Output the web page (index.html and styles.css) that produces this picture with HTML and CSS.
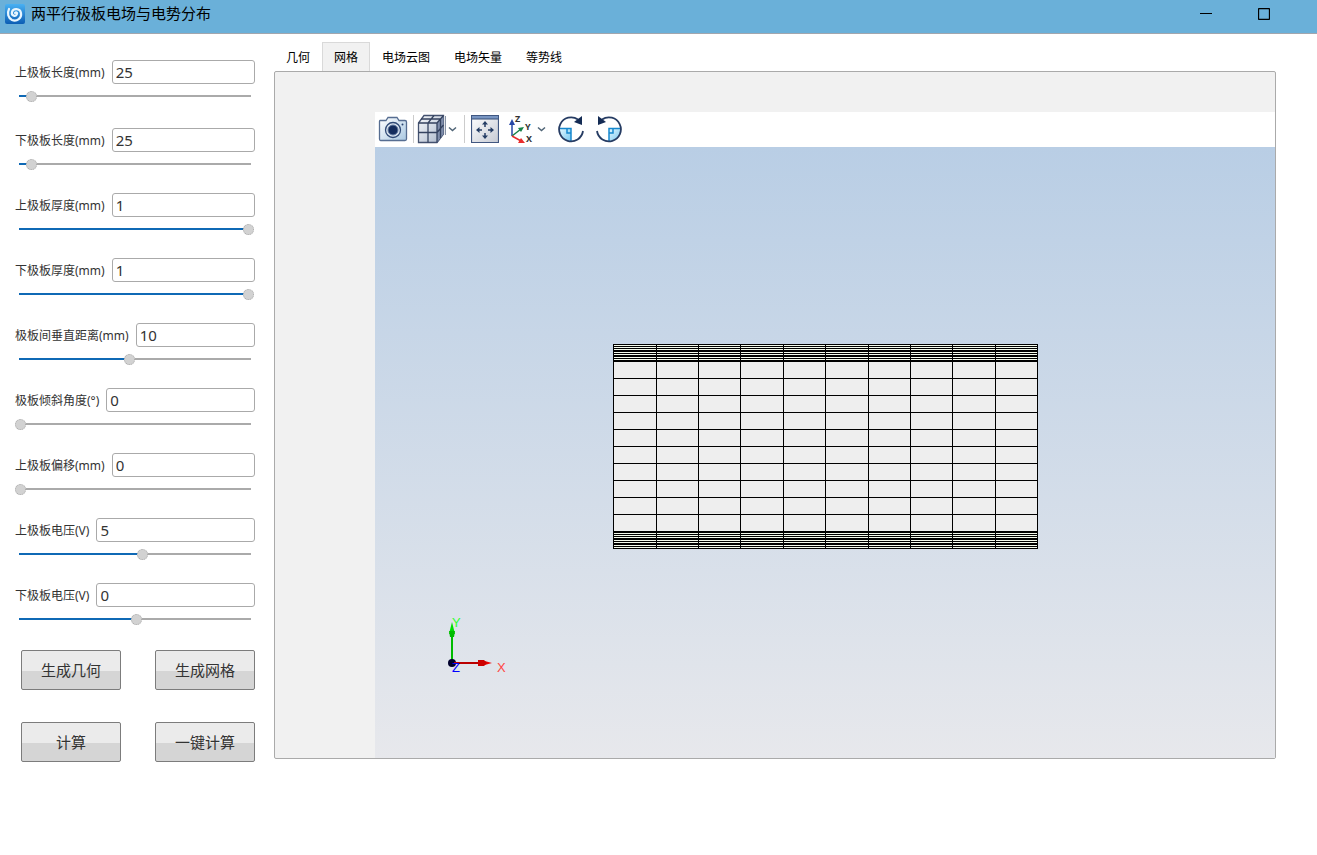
FILE: index.html
```html
<!DOCTYPE html>
<html lang="zh-CN">
<head>
<meta charset="utf-8">
<title>两平行极板电场与电势分布</title>
<link rel="stylesheet" href="styles.css">
</head>
<body>
<header class="titlebar">
  <svg class="app-icon" width="20" height="20" viewBox="0 0 20 20" aria-hidden="true">
    <defs><linearGradient id="app" x1="0" y1="0" x2="0" y2="1"><stop offset="0" stop-color="#49b1f3"/><stop offset="1" stop-color="#0b5db4"/></linearGradient></defs>
    <rect width="20" height="20" rx="2" fill="url(#app)"/>
    <path d="M4 5C2 9 3 14 7 16C12 18 17 14 16 9C15 4 8 4 7 8C6 12 11 13 12 10C12.500 8.500 11 8 10 9" fill="none" stroke="#e8f6ff" stroke-width="2.200" stroke-linecap="round"/>
  </svg>
  <h1 class="title">两平行极板电场与电势分布</h1>
  <div class="window-controls">
    <button class="win-btn" type="button" aria-label="最小化"><svg width="12" height="12" viewBox="0 0 12 12"><path d="M0 5.500H12" stroke="#000"/></svg></button>
    <button class="win-btn" type="button" aria-label="最大化"><svg width="12" height="12" viewBox="0 0 12 12"><rect x=".5" y=".5" width="11" height="11" rx="1" fill="none" stroke="#000" stroke-width="1.300"/></svg></button>
  </div>
</header>
<main class="workspace">
  <form class="params">
    <div class="param param-first">
      <div class="field"><label class="name" for="p1">上极板长度(mm)</label><input class="value" id="p1" type="text" value="25"></div>
      <input class="slider" type="range" aria-label="上极板长度" min="0" max="1000" value="48" style="--p:4.6%">
    </div>
    <div class="param">
      <div class="field"><label class="name" for="p2">下极板长度(mm)</label><input class="value" id="p2" type="text" value="25"></div>
      <input class="slider" type="range" aria-label="下极板长度" min="0" max="1000" value="48" style="--p:4.6%">
    </div>
    <div class="param">
      <div class="field"><label class="name" for="p3">上极板厚度(mm)</label><input class="value" id="p3" type="text" value="1"></div>
      <input class="slider" type="range" aria-label="上极板厚度" min="0" max="1000" value="1000" style="--p:96%">
    </div>
    <div class="param">
      <div class="field"><label class="name" for="p4">下极板厚度(mm)</label><input class="value" id="p4" type="text" value="1"></div>
      <input class="slider" type="range" aria-label="下极板厚度" min="0" max="1000" value="1000" style="--p:96%">
    </div>
    <div class="param">
      <div class="field"><label class="name" for="p5">极板间垂直距离(mm)</label><input class="value" id="p5" type="text" value="10"></div>
      <input class="slider" type="range" aria-label="极板间垂直距离" min="0" max="1000" value="476" style="--p:46%">
    </div>
    <div class="param">
      <div class="field"><label class="name" for="p6">极板倾斜角度(°)</label><input class="value" id="p6" type="text" value="0"></div>
      <input class="slider" type="range" aria-label="极板倾斜角度" min="0" max="1000" value="0" style="--p:0%">
    </div>
    <div class="param">
      <div class="field"><label class="name" for="p7">上极板偏移(mm)</label><input class="value" id="p7" type="text" value="0"></div>
      <input class="slider" type="range" aria-label="上极板偏移" min="0" max="1000" value="0" style="--p:0%">
    </div>
    <div class="param">
      <div class="field"><label class="name" for="p8">上极板电压(V)</label><input class="value" id="p8" type="text" value="5"></div>
      <input class="slider" type="range" aria-label="上极板电压" min="0" max="1000" value="533" style="--p:52%">
    </div>
    <div class="param">
      <div class="field"><label class="name" for="p9">下极板电压(V)</label><input class="value" id="p9" type="text" value="0"></div>
      <input class="slider" type="range" aria-label="下极板电压" min="0" max="1000" value="507" style="--p:49%">
    </div>
    <div class="actions">
      <button class="action" type="button">生成几何</button>
      <button class="action" type="button">生成网格</button>
      <button class="action" type="button">计算</button>
      <button class="action" type="button">一键计算</button>
    </div>
  </form>
  <section class="viewer">
    <div class="tabs" role="tablist">
      <button class="tab" type="button" role="tab">几何</button>
      <button class="tab tab-active" type="button" role="tab" aria-selected="true">网格</button>
      <button class="tab" type="button" role="tab">电场云图</button>
      <button class="tab" type="button" role="tab">电场矢量</button>
      <button class="tab" type="button" role="tab">等势线</button>
    </div>
    <div class="panel">
      <div class="stage">
        <div class="toolbar">
          <button class="tool" type="button" aria-label="截图"><svg width="30" height="32" viewBox="0 0 30 32">
            <defs><linearGradient id="cam" x1="0" y1="0" x2="1" y2="1"><stop offset="0" stop-color="#fff"/><stop offset="1" stop-color="#a9c8e2"/></linearGradient></defs>
            <path d="M2 7.500H8L10 4.500H19L21 7.500H27Q28.500 7.500 28.500 9V26Q28.500 27.500 27 27.500H2.500Q1.500 27.500 1.500 26V9Q1.500 7.500 2 7.500Z" fill="url(#cam)" stroke="#566d91" stroke-width="1.300"/>
            <circle cx="15" cy="17" r="7.500" fill="#dce6f0" stroke="#304a76" stroke-width="1.300"/><circle cx="15" cy="17" r="5" fill="#142c5c" stroke="#637ca3"/><circle cx="24.500" cy="11.500" r="1" fill="#28436e"/>
          </svg></button>
          <span class="divider"></span>
          <button class="tool" type="button" aria-label="视图"><svg width="42" height="32" viewBox="0 0 42 32">
            <defs><linearGradient id="cube" x1="0" y1="0" x2="1" y2="1"><stop offset="0" stop-color="#f8fafc"/><stop offset="1" stop-color="#a9b6ca"/></linearGradient></defs>
            <path d="M1.500 10L7 2.500H26.500V21L20 29.500H1.500Z" fill="url(#cube)" stroke="#43516f" stroke-width="1.300"/>
            <path d="M20 10L26.500 2.500V21L20 29.500Z" fill="#7f8dab"/><path d="M1.500 10H20V29.500M20 10L26.500 2.500M11 29.500V10L17 2.500M1.500 19.500H20L26.500 12M4 6H23.500V25" fill="none" stroke="#34425f" stroke-width="1.300"/>
            <path d="M28.500 3V22" stroke="#8792a5"/><path d="M32 14.500L35.500 17.500L39 14.500" fill="none" stroke="#4f6476" stroke-width="1.500"/>
          </svg></button>
          <span class="divider"></span>
          <button class="tool tool-fit" type="button" aria-label="缩放到适合"><svg width="28" height="32" viewBox="0 0 28 32">
            <defs><linearGradient id="fit" x1="0" y1="0" x2="1" y2="1"><stop stop-color="#fff"/><stop offset="1" stop-color="#c5cad4"/></linearGradient></defs>
            <path d="M.5 2.500H27.500V29.500H.5Z" fill="url(#fit)" stroke="#405781" stroke-width="1.200"/><path d="M1 3H27V6H1Z" fill="#7895c2"/><path d="M1 6H27" stroke="#344c77"/>
            <g fill="none" stroke="#243d64" stroke-width="1.500"><path d="M14 14V10M14 20V24M11 17H7M17 17H21"/></g>
            <path d="M14 8L17 11.500H11ZM14 26L17 22.500H11ZM5 17L8.500 14V20ZM23 17L19.500 14V20Z" fill="#243d64"/>
          </svg></button>
          <button class="tool tool-axes" type="button" aria-label="坐标轴"><svg width="38" height="32" viewBox="0 0 38 32">
            <g fill="none" stroke-width="1.500"><path d="M4 23V9" stroke="#2847a6"/><path d="M4 23L13 16" stroke="#168248"/><path d="M4 23L13 28" stroke="#e92d2d"/></g>
            <path d="M4 6L7 12H1Z" fill="#2847a6"/><path d="M16 14L13 19L10 15Z" fill="#168248"/><path d="M17 30L10 30L13 25Z" fill="#e92d2d"/>
            <text class="axis-name" x="7" y="9">Z</text><text class="axis-name" x="17" y="17">Y</text><text class="axis-name" x="18" y="29">X</text>
            <path d="M30 14.500L33.500 17.500L37 14.500" fill="none" stroke="#4f6476" stroke-width="1.500"/>
          </svg></button>
          <button class="tool tool-rotate" type="button" aria-label="顺时针旋转"><svg width="28" height="32" viewBox="0 0 28 32">
            <defs><linearGradient id="quad" x1="0" y1="0" x2="1" y2="1"><stop stop-color="#e4f8ff"/><stop offset="1" stop-color="#72c5ef"/></linearGradient></defs>
            <path d="M2 16H14V29Q4 27 2 16Z" fill="url(#quad)"/><path d="M2 15.500H14V28M10 16V20H14" fill="none" stroke="#1688ce" stroke-width="1.500"/>
            <path d="M21 6.500A12 12 0 1 0 26 18" fill="none" stroke="#263c63" stroke-width="1.800"/><path d="M25 3V12L17 9Z" fill="#142b54"/>
          </svg></button>
          <button class="tool tool-rotate" type="button" aria-label="逆时针旋转"><svg width="28" height="32" viewBox="0 0 28 32">
            <path d="M26 16H14V29Q24 27 26 16Z" fill="url(#quad)"/><path d="M26 15.500H14V28M18 16V20H14" fill="none" stroke="#1688ce" stroke-width="1.500"/>
            <path d="M7 6.500A12 12 0 1 1 2 18" fill="none" stroke="#263c63" stroke-width="1.800"/><path d="M3 3V12L11 9Z" fill="#142b54"/>
          </svg></button>
        </div>
        <div class="canvas">
          <svg class="scene" viewBox="0 0 900 611" role="img" aria-label="网格">
            <rect x="238" y="197" width="425" height="204" fill="#eee"/>
            <path d="M239 197H662V214H239ZM239 385H662V401H239Z" fill="#f4faec"/>
            <g class="mesh">
              <path d="M238.500 198V402M281.500 197V402M323.500 197V402M365.500 197V402M408.500 197V402M450.500 197V402M493.500 197V402M535.500 197V402M577.500 197V402M620.500 197V402M662.500 197V402"/>
              <path d="M238 197.500H663M238 199.500H663M238 201.500H663M238 203.500H663M238 204.500H663M238 206.500H663M238 208.500H663M238 209.500H663M238 211.500H663M238 213.500H663M238 214.500H663"/>
              <path d="M238 231.500H663M238 248.500H663M238 265.500H663M238 282.500H663M238 299.500H663M238 316.500H663M238 333.500H663M238 350.500H663M238 367.500H663"/>
              <path d="M238 384.500H663M238 385.500H663M238 387.500H663M238 389.500H663M238 391.500H663M238 392.500H663M238 394.500H663M238 396.500H663M238 397.500H663M238 399.500H663M238 401.500H663"/>
            </g>
            <path d="M77 516V489" stroke="#0b0" stroke-width="2"/><path d="M77 475L80 487H74Z" fill="#0d0"/><path d="M74 484H80L79 490H75Z" fill="#0b0"/>
            <circle cx="77" cy="516" r="4" fill="#00002c"/>
            <path d="M79 516H103" stroke="#b00" stroke-width="2"/><path d="M117 516L106 519V513Z" fill="#e00"/><path d="M103 513H109L112 516L109 519H103Z" fill="#c00"/>
            <text class="axis axis-y" x="77" y="480">Y</text><text class="axis axis-x" x="122" y="525">X</text><text class="axis axis-z" x="77" y="525">Z</text>
          </svg>
        </div>
      </div>
    </div>
  </section>
</main>
</body>
</html>
```
FILE: styles.css
```css
* { box-sizing: border-box; }
body {
  margin: 0;
  min-height: 100vh;
  display: flex;
  flex-direction: column;
  background: #fff;
  color: #333;
  font: 12px/16px "Noto Sans", "Noto Sans CJK SC", sans-serif;
}
button, input { font: inherit; color: inherit; }
svg { display: block; }

.titlebar {
  height: 34px;
  display: flex;
  align-items: flex-start;
  padding: 4px 47px 0 5px;
  background: #6ab0d9;
  border-bottom: 1px solid #a2a6ae;
}
.title {
  flex: 1;
  margin: 0 0 0 6px;
  color: #000;
  font-size: 15px;
  font-weight: 400;
  line-height: 18px;
}
.window-controls { display: flex; gap: 46px; padding-top: 4px; }
.win-btn { padding: 0; border: 0; background: none; }

.workspace {
  flex: 1;
  display: grid;
  grid-template-columns: 240px 1fr;
  column-gap: 19px;
  padding: 8px 41px 93px 15px;
}
.params { padding-top: 18px; }
.param { margin-bottom: 21px; }
.param-first { margin-bottom: 24px; }
.field { display: flex; align-items: center; gap: 7px; }
.name { padding-top: 2px; }
.value {
  flex: 1;
  min-width: 0;
  height: 24px;
  padding: 0 3px;
  border: 1px solid #aaa;
  border-radius: 3px;
  background: #fff;
  font-size: 15px;
}
.slider {
  appearance: none;
  display: block;
  width: 239px;
  height: 16px;
  margin: 4px 0 0;
  background:
    linear-gradient(#0f69b5, #0f69b5) 4px 7px / var(--p) 2px no-repeat,
    linear-gradient(#aaa, #aaa) 4px 7px / calc(100% - 7px) 2px no-repeat;
}
.slider::-webkit-slider-thumb {
  appearance: none;
  width: 11px;
  height: 11px;
  border: 1px dotted #aaa;
  border-radius: 50%;
  background: #d2d2d2;
}
.actions {
  display: grid;
  grid-template-columns: 100px 100px;
  justify-content: space-between;
  row-gap: 32px;
  padding: 2px 0 0 6px;
}
.action {
  height: 40px;
  padding: 0;
  border: 1px solid #7c7c7c;
  border-radius: 2px;
  background: linear-gradient(#ebebeb 52%, #d5d5d5 52%);
  font-size: 15px;
}

.viewer {
  display: flex;
  flex-direction: column;
  min-width: 0;
  margin-bottom: 3px;
}
.tabs { display: flex; height: 29px; }
.tab {
  padding: 2px 12px 0;
  border: 0;
  background: none;
  color: #000;
}
.tab-active {
  padding: 1px 11px 0;
  border: 1px solid #d9d9d9;
  border-bottom: 0;
  background: #f1f1f1;
}
.panel {
  flex: 1;
  display: flex;
  padding: 40px 0 0 100px;
  border: 1px solid #aaa;
  border-radius: 2px;
  background: #f1f1f1;
}
.stage { flex: 1; display: flex; flex-direction: column; min-width: 0; }
.toolbar {
  display: flex;
  align-items: center;
  height: 35px;
  padding: 0 3px 2px;
  background: #fff;
}
.tool { padding: 0; border: 0; background: none; }
.divider { width: 1px; height: 28px; margin: 0 3px 0 5px; background: #ccc; }
.tool-fit { margin-left: 3px; }
.tool-axes { margin-left: 9px; }
.tool-rotate { margin-left: 11px; }
.tool-rotate + .tool-rotate { margin-left: 10px; }
.axis-name { font: 700 9px "Noto Sans", sans-serif; fill: #333; }
.canvas {
  flex: 1;
  min-height: 0;
  background: linear-gradient(#b9cee5, #e7e8ec);
}
.scene { width: 100%; height: auto; }
.mesh { fill: none; stroke: #000; shape-rendering: crispEdges; }
.axis { font: 13px "Liberation Sans", sans-serif; }
.axis-x { fill: #f44; }
.axis-y { fill: #3f3; }
.axis-z { fill: #00f; }
```
